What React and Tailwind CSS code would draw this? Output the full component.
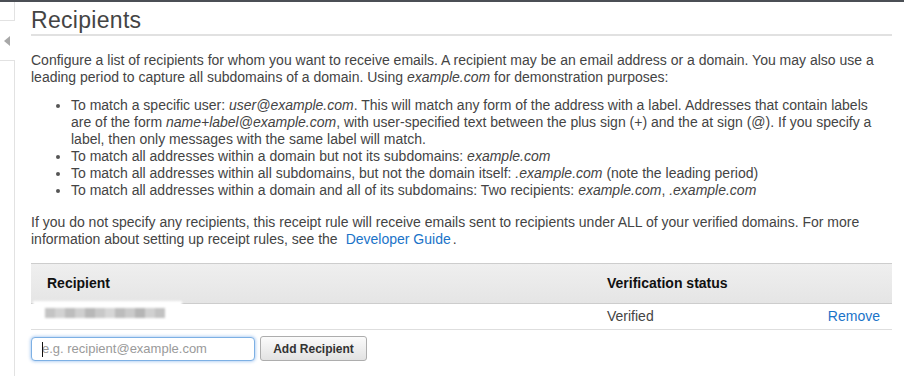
import React from "react";

const font = { fontFamily: '"Liberation Sans", Arial, Helvetica, sans-serif' };

// Pixelated blocks that stand in for the redacted address
const redacted = [
  "bg-[#c4c4c4]", "bg-[#d2d2d2]", "bg-[#bdbdbd]", "bg-[#cfcfcf]", "bg-[#b8b8b8]",
  "bg-[#c8c8c8]", "bg-[#d6d6d6]", "bg-[#bcbcbc]", "bg-[#cacaca]", "bg-[#b5b5b5]",
  "bg-[#d0d0d0]", "bg-[#c2c2c2]",
];

export default function App() {
  return (
    <div
      className="w-[904px] h-[376px] overflow-hidden bg-white border-t-2 border-[#4b4f55] flex text-[#444]"
      style={font}
    >
      {/*Collapsed side nav*/}
      <div className="w-[15px] shrink-0 flex flex-col">
        <div className="h-[19px] border-r border-b border-[#e2e2e2]" />
        <div className="h-[39px] flex items-center justify-start pl-[4px]">
          <span className="block w-0 h-0 border-y-[5px] border-y-transparent border-r-[6px] border-r-[#a8a8a8]" />
        </div>
        <div className="flex-1 border-r border-t border-[#e2e2e2]" />
      </div>

      {/*Main content*/}
      <div className="flex-1 pl-[16px] pr-[12px]">
        <h1 className="pt-[4px] text-[23px] leading-[28px] tracking-[0.3px] text-[#444] border-b-2 border-[#e1e1e1]">
          Recipients
        </h1>

        <p className="mt-[16px] text-[14px] leading-[17px]">
          Configure a list of recipients for whom you want to receive emails. A recipient may be an email address or a domain. You may also use a leading period to capture all subdomains of a domain. Using <i>example.com</i> for demonstration purposes:
        </p>

        <ul className="mt-[11px] list-disc pl-[40px] pr-[12px] text-[14px] leading-[17px] marker:text-[#555]">
          <li>
            To match a specific user: <i>user@example.com</i>. This will match any form of the address with a label. Addresses that contain labels are of the form <i>name+label@example.com</i>, with user-specified text between the plus sign (+) and the at sign (@). If you specify a label, then only messages with the same label will match.
          </li>
          <li>To match all addresses within a domain but not its subdomains: <i>example.com</i></li>
          <li>To match all addresses within all subdomains, but not the domain itself: <i>.example.com</i> (note the leading period)</li>
          <li>To match all addresses within a domain and all of its subdomains: Two recipients: <i>example.com</i>, <i>.example.com</i></li>
        </ul>

        <p className="mt-[15px] text-[14px] leading-[17px]">
          If you do not specify any recipients, this receipt rule will receive emails sent to recipients under ALL of your verified domains. For more information about setting up receipt rules, see the
          <a href="#" className="text-[#1a73c8] ml-[8px] mr-[2px]">Developer Guide</a>.
        </p>

        {/*Recipients table*/}
        <div className="mt-[15px] text-[14px]">
          <div className="grid grid-cols-[560px_1fr] h-[41px] items-center border-t border-b border-[#cdcdcd] bg-gradient-to-b from-[#efefef] to-[#e5e5e5] font-bold text-[#111]">
            <div className="pl-[16px]">Recipient</div>
            <div className="pl-[16px]">Verification status</div>
          </div>

          <div className="relative grid grid-cols-[560px_1fr_auto] h-[26px] items-center border-b border-[#dedede]">
            <div />
            <div className="pl-[16px]">Verified</div>
            <a href="#" className="pr-[12px] text-[#1a73c8]">Remove</a>

            <div className="absolute left-[2px] top-[-3px] w-[149px] h-[23px] bg-white blur-[1px] flex items-center pl-[12px]">
              <div className="flex h-[10px]">
                {redacted.map((c, i) => (
                  <span key={i} className={`block w-[10px] h-full ${c}`} />
                ))}
              </div>
            </div>
          </div>

          <div className="flex items-center gap-[5px] mt-[6px]">
            <div className="relative w-[224px] h-[24px] rounded-[4px] border border-[#7db0e4] shadow-[0_0_3px_1px_rgba(100,160,230,0.45)] bg-white flex items-center">
              <span className="absolute left-[10px] top-[4px] w-px h-[15px] bg-[#111]" />
              <input
                className="w-full h-full pl-[10px] text-[13px] outline-none bg-transparent placeholder:text-[#9a9a9a]"
                style={font}
                placeholder="e.g. recipient@example.com"
              />
            </div>
            <button
              className="w-[107px] h-[25px] rounded-[3px] border border-[#adadad] bg-gradient-to-b from-[#fbfbfb] to-[#e2e2e2] text-[12px] font-bold text-[#333]"
              style={font}
            >
              Add Recipient
            </button>
          </div>
        </div>
      </div>
    </div>
  );
}
